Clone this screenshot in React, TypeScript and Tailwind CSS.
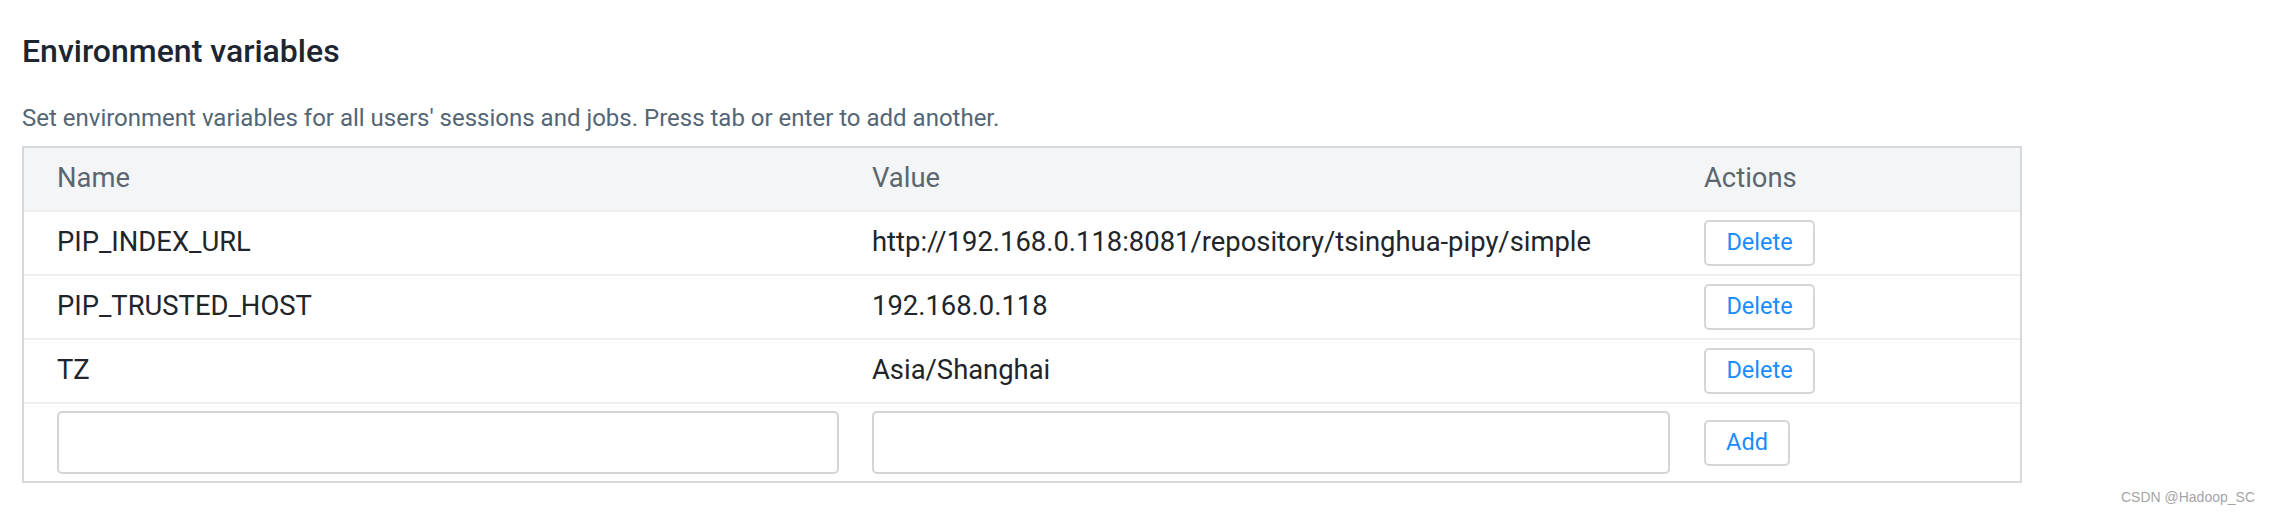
const rows = [
  { name: 'PIP_INDEX_URL', value: 'http://192.168.0.118:8081/repository/tsinghua-pipy/simple' },
  { name: 'PIP_TRUSTED_HOST', value: '192.168.0.118' },
  { name: 'TZ', value: 'Asia/Shanghai' },
];

export default function App() {
  return (
    <div className="relative w-[2272px] h-[512px] bg-white font-['Roboto',sans-serif] overflow-hidden">
      <div className="pl-[22px] pt-[32px]">
        <h2 className="text-[32px] leading-[38px] font-medium text-[#1d2630]">Environment variables</h2>
        <p className="mt-[30px] text-[24px] leading-[36px] text-[#546575]">
          Set environment variables for all users' sessions and jobs. Press tab or enter to add another.
        </p>

        <div className="mt-[10px] w-[2000px] border-2 border-[#d7d8dc]">
          {/* Header */}
          <div className="grid grid-cols-[815px_831px_1fr] h-[62px] items-center bg-[#f4f5f7] text-[27.4px] text-[#5b6670]">
            <div className="pl-[33px]">Name</div>
            <div className="pl-[33px]">Value</div>
            <div className="pl-[34px]">Actions</div>
          </div>

          {rows.map((r) => (
            <div
              key={r.name}
              className="grid grid-cols-[815px_831px_1fr] h-[64px] items-center border-t-2 border-[#efeff1] text-[27.4px] text-[#212529]"
            >
              <div className="pl-[33px] whitespace-nowrap">{r.name}</div>
              <div className="pl-[33px] whitespace-nowrap">{r.value}</div>
              <div className="pl-[34px]">
                <ActionButton label="Delete" width="w-[111px]" />
              </div>
            </div>
          ))}

          {/* New entry */}
          <div className="grid grid-cols-[815px_831px_1fr] items-center border-t-2 border-[#efeff1] py-[7px]">
            <div className="pl-[33px]">
              <input className="block w-full h-[63px] rounded-[5px] border-2 border-[#d4d4d8] bg-white outline-none" />
            </div>
            <div className="pl-[33px]">
              <input className="block w-full h-[63px] rounded-[5px] border-2 border-[#d4d4d8] bg-white outline-none" />
            </div>
            <div className="pl-[34px]">
              <ActionButton label="Add" width="w-[86px]" />
            </div>
          </div>
        </div>
      </div>

      {/* watermark */}
      <div className="absolute right-[17px] top-[489px] text-[14px] leading-[16px] font-['Liberation_Sans',sans-serif] text-[#a5a5a5]">
        CSDN @Hadoop_SC
      </div>
    </div>
  );
}

function ActionButton({ label, width }: { label: string; width: string }) {
  return (
    <button
      className={`${width} h-[46px] rounded-[5px] border-2 border-[#d5d6da] bg-white text-[23.5px] text-[#1a8cff] flex items-center justify-center`}
    >
      {label}
    </button>
  );
}
